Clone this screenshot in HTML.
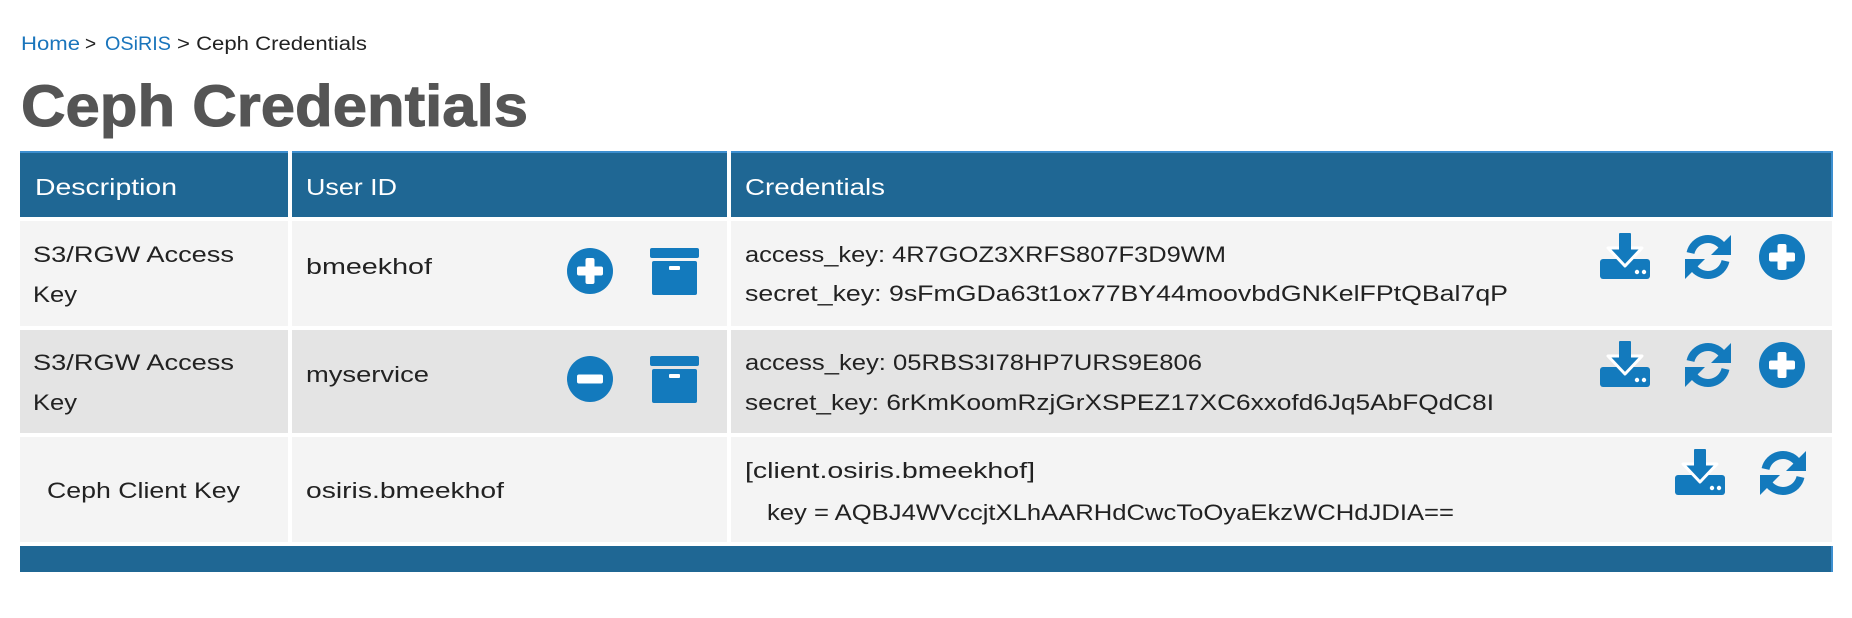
<!DOCTYPE html>
<html><head><meta charset="utf-8"><style>
html,body{margin:0;padding:0;background:#fff;width:1852px;height:618px;overflow:hidden}
svg{display:block}
text{font-family:"Liberation Sans",sans-serif}
</style></head><body>
<svg width="1852" height="618" viewBox="0 0 1852 618" xmlns="http://www.w3.org/2000/svg">
<defs>
<g id="plus"><circle cx="24" cy="24" r="23" fill="#137abd"/><rect x="19.5" y="11" width="9" height="26" rx="2" fill="#fff"/><rect x="11" y="19.5" width="26" height="9" rx="2" fill="#fff"/></g>
<g id="minus"><circle cx="24" cy="24" r="23" fill="#137abd"/><rect x="11" y="19.5" width="26" height="9" rx="2" fill="#fff"/></g>
<g id="archive"><rect x="0" y="0" width="49" height="10" rx="2" fill="#137abd"/><rect x="2" y="13" width="45" height="34" rx="2" fill="#137abd"/><rect x="19" y="18" width="11" height="4" rx="1" fill="#fff"/></g>
<g id="dl"><rect x="0" y="26" width="50" height="20" rx="3" fill="#137abd"/><polygon points="8,15 42,15 25,33" fill="#137abd" stroke="#fff" stroke-width="3" stroke-linejoin="round"/><rect x="19" y="0" width="12" height="20" rx="1" fill="#137abd"/><circle cx="37" cy="39" r="2.2" fill="#fff"/><circle cx="44" cy="39" r="2.2" fill="#fff"/></g>
<g id="sync" fill="none" stroke="#137abd" stroke-width="8"><path d="M6.5,20 A18,18 0 0 1 37.8,12.4"/><path d="M41.5,28 A18,18 0 0 1 10.2,35.6"/><polygon points="47,2 47,22 27,22" fill="#137abd" stroke="none"/><polygon points="1,46 1,26 21,26" fill="#137abd" stroke="none"/></g>
</defs>

<text x="21" y="50" font-size="19" fill="#1a75bc" textLength="59" lengthAdjust="spacingAndGlyphs">Home</text>
<text x="85" y="50" font-size="19" fill="#222">&gt;</text>
<text x="105" y="50" font-size="19" fill="#1a75bc" textLength="66" lengthAdjust="spacingAndGlyphs">OSiRIS</text>
<text x="177" y="50" font-size="19" fill="#222" textLength="190" lengthAdjust="spacingAndGlyphs">&gt; Ceph Credentials</text>
<text x="21" y="126" font-size="58" font-weight="bold" fill="#555" stroke="#555" stroke-width="1" textLength="507" lengthAdjust="spacingAndGlyphs">Ceph Credentials</text>

<rect x="20" y="151" width="268" height="66" fill="#1f6794"/>
<rect x="292" y="151" width="435" height="66" fill="#1f6794"/>
<rect x="731" y="151" width="1102" height="66" fill="#1f6794"/>
<rect x="20" y="151" width="268" height="2" fill="#3d8fd0"/>
<rect x="292" y="151" width="435" height="2" fill="#3d8fd0"/>
<rect x="731" y="151" width="1102" height="2" fill="#3d8fd0"/>
<rect x="1831" y="151" width="2" height="66" fill="#3d8fd0"/>
<text x="35" y="195" font-size="23" fill="#fff" textLength="142" lengthAdjust="spacingAndGlyphs">Description</text>
<text x="306" y="195" font-size="23" fill="#fff" textLength="91" lengthAdjust="spacingAndGlyphs">User ID</text>
<text x="745" y="195" font-size="23" fill="#fff" textLength="140" lengthAdjust="spacingAndGlyphs">Credentials</text>

<g fill="#f4f4f4"><rect x="20" y="221" width="268" height="105"/><rect x="292" y="221" width="435" height="105"/><rect x="731" y="221" width="1101" height="105"/></g>
<g fill="#e4e4e4"><rect x="20" y="330" width="268" height="103"/><rect x="292" y="330" width="435" height="103"/><rect x="731" y="330" width="1101" height="103"/></g>
<g fill="#f4f4f4"><rect x="20" y="437" width="268" height="105"/><rect x="292" y="437" width="435" height="105"/><rect x="731" y="437" width="1101" height="105"/></g>
<rect x="20" y="546" width="1813" height="26" fill="#1f6794"/>
<rect x="1831" y="546" width="2" height="26" fill="#3d8fd0"/>

<g font-size="22" fill="#222">
<text x="33" y="262" textLength="201" lengthAdjust="spacingAndGlyphs">S3/RGW Access</text>
<text x="33" y="302" textLength="44" lengthAdjust="spacingAndGlyphs">Key</text>
<text x="306" y="274" textLength="126" lengthAdjust="spacingAndGlyphs">bmeekhof</text>
<text x="745" y="262" textLength="481" lengthAdjust="spacingAndGlyphs">access_key: 4R7GOZ3XRFS807F3D9WM</text>
<text x="745" y="301" textLength="763" lengthAdjust="spacingAndGlyphs">secret_key: 9sFmGDa63t1ox77BY44moovbdGNKelFPtQBal7qP</text>

<text x="33" y="370" textLength="201" lengthAdjust="spacingAndGlyphs">S3/RGW Access</text>
<text x="33" y="410" textLength="44" lengthAdjust="spacingAndGlyphs">Key</text>
<text x="306" y="382" textLength="123" lengthAdjust="spacingAndGlyphs">myservice</text>
<text x="745" y="370" textLength="457" lengthAdjust="spacingAndGlyphs">access_key: 05RBS3I78HP7URS9E806</text>
<text x="745" y="410" textLength="749" lengthAdjust="spacingAndGlyphs">secret_key: 6rKmKoomRzjGrXSPEZ17XC6xxofd6Jq5AbFQdC8I</text>

<text x="47" y="498" textLength="193" lengthAdjust="spacingAndGlyphs">Ceph Client Key</text>
<text x="306" y="498" textLength="198" lengthAdjust="spacingAndGlyphs">osiris.bmeekhof</text>
<text x="745" y="478" textLength="290" lengthAdjust="spacingAndGlyphs">[client.osiris.bmeekhof]</text>
<text x="767" y="520" textLength="687" lengthAdjust="spacingAndGlyphs">key = AQBJ4WVccjtXLhAARHdCwcToOyaEkzWCHdJDIA==</text>
</g>

<use href="#plus" x="566" y="247"/>
<use href="#archive" x="650" y="248"/>
<use href="#dl" x="1600" y="233"/>
<use href="#sync" x="1684" y="233"/>
<use href="#plus" x="1758" y="233"/>

<use href="#minus" x="566" y="355"/>
<use href="#archive" x="650" y="356"/>
<use href="#dl" x="1600" y="341"/>
<use href="#sync" x="1684" y="341"/>
<use href="#plus" x="1758" y="341"/>

<use href="#dl" x="1675" y="449"/>
<use href="#sync" x="1759" y="449"/>
</svg>
</body></html>
